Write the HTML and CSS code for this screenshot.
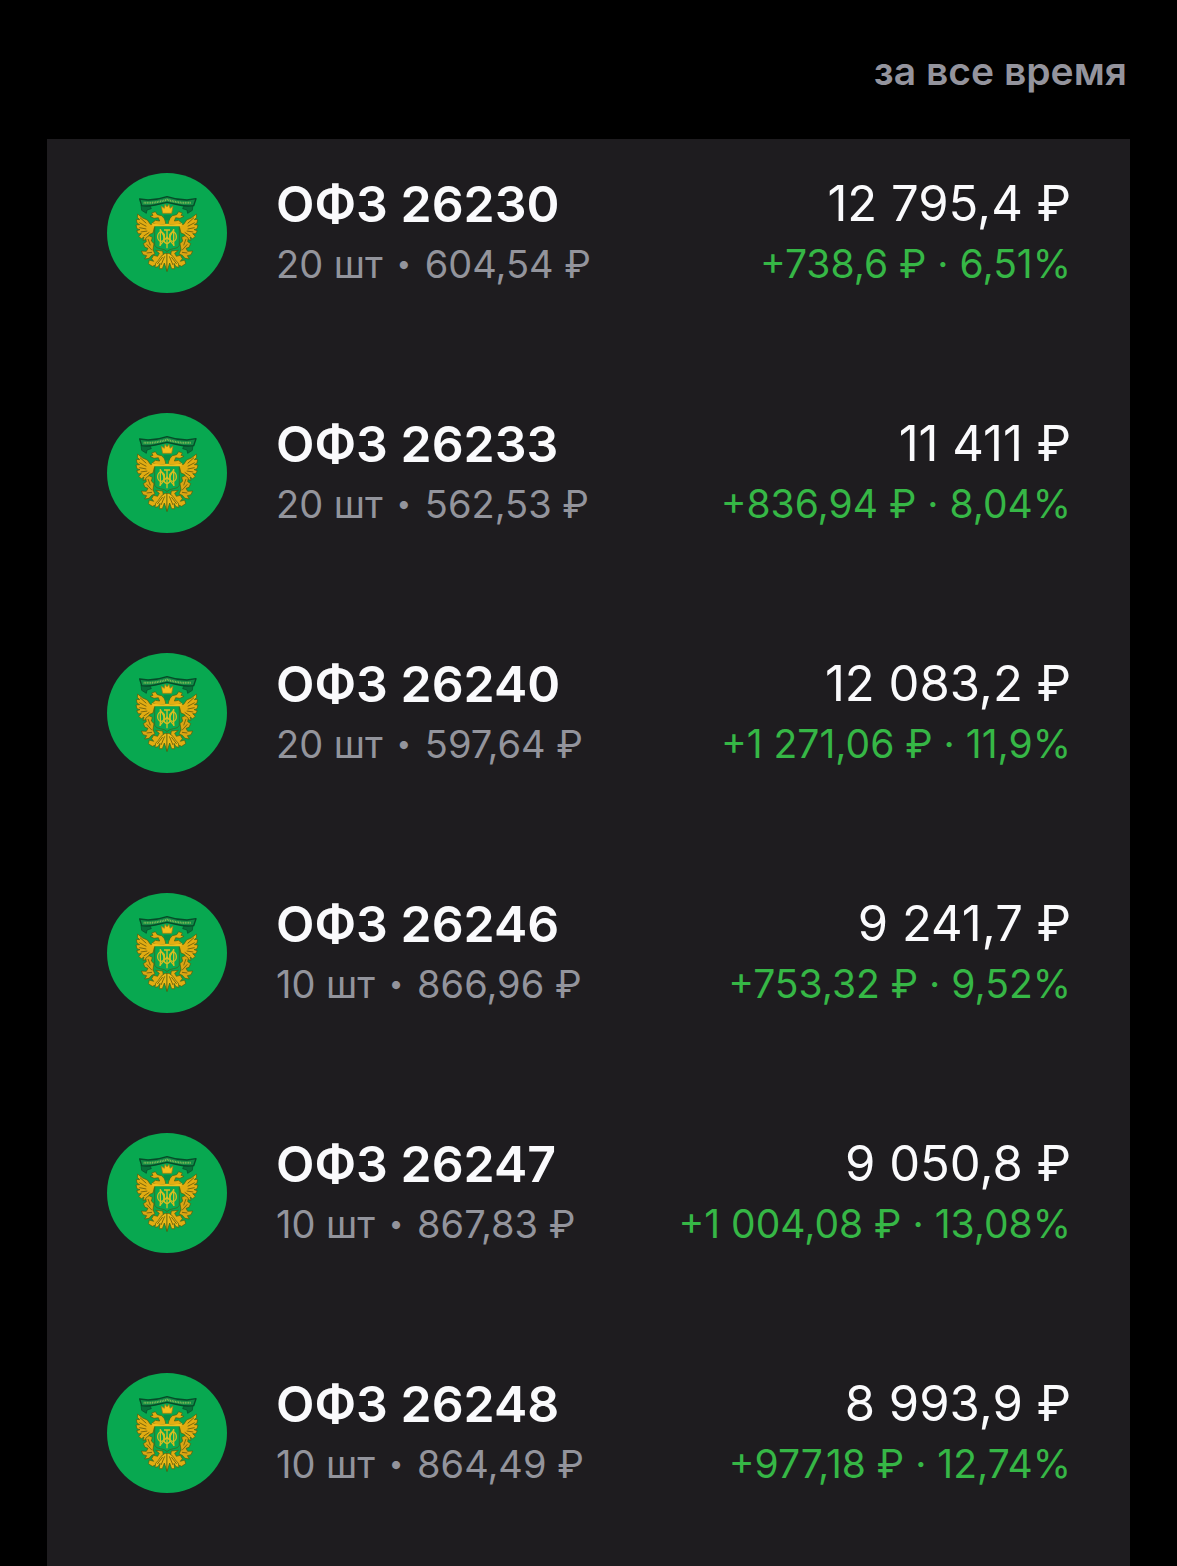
FILE: index.html
```html
<!DOCTYPE html>
<html lang="ru">

<head>
    <meta charset="UTF-8">
    <meta name="viewport" content="width=device-width, initial-scale=1.0">
    <title>Портфель</title>
    <link rel="stylesheet" href="styles.css">
</head>

<body>
    <!-- Bond emblem, reused in every row -->
    <svg class="sprite" aria-hidden="true">
        <symbol id="emblem" viewBox="30 30 360 360">
            <circle cx="210" cy="210" r="180" fill="#08a850" />
            <g id="half" stroke="#4f5a0e" stroke-width="2" stroke-linejoin="round">
                <!-- ribbon end -->
                <path d="M132 126 L134 142 L148 151 L150 141 L163 137 L158 126 Z" fill="#08713a" stroke="#064a28" />
                <!-- wing -->
                <path d="M186 183 L160 184 L151 171 L137 165 L122 153 L121 163 L128 170 L118 169 L120 180 L128 185 L117 186 L120 197 L129 200 L119 203 L124 212 L133 212 L125 220 L133 227 L141 222 L138 232 L149 229 L158 214 L168 210 L172 194 Z" fill="#e2ac12" />
                <path d="M129 164 L148 181 M127 179 L148 190 M127 194 L148 198 M131 207 L151 204 M140 219 L157 208" fill="none" stroke="#7b680d" stroke-width="3" />
                <!-- neck and head -->
                <path d="M207 184 L203 168 L194 158 L181 155 L175 146 L164 150 L168 157 L159 160 L171 166 L184 164 L188 174 L175 172 L166 180 L180 186 Z" fill="#e2ac12" />
                <!-- figure beside the shield -->
                <path d="M156 218 L146 225 L148 236 L139 242 L144 253 L153 256 L148 265 L133 264 L138 275 L149 278 L143 288 L156 286 L164 277 L174 273 L168 260 L171 242 L163 234 L166 223 Z" fill="#d9a514" />
                <path d="M153 228 L160 247 M149 244 L165 262 M149 270 L165 268" fill="none" stroke="#7b680d" stroke-width="3" />
                <!-- leg and scroll -->
                <path d="M176 262 L187 271 L182 280 L170 277 L164 287 L170 295 L157 291 L154 302 L166 310 L178 305 L188 290 L199 276 L197 264 Z" fill="#e2ac12" />
                <!-- tail feathers -->
                <path d="M204 271 L192 280 L184 292 L176 301 L174 313 L183 311 L189 301 L187 317 L196 317 L202 300 L210 325 L210 271 Z" fill="#e9b817" />
                <path d="M203 280 L192 306 M197 282 L181 303" fill="none" stroke="#7b680d" stroke-width="3" />
            </g>
            <use href="#half" transform="translate(420 0) scale(-1 1)" />
            <!-- shield -->
            <path d="M173 188 H247 V247 Q244 256 230 257 Q215 259 210 266 Q205 259 190 257 Q176 256 173 247 Z" fill="#08a850" stroke="#4b5b10" stroke-width="2" />
            <path d="M164 180 Q188 187 210 182 Q232 187 256 180 L253 190 H167 Z" fill="#f0bd1b" />
            <!-- monogram -->
            <g fill="none" stroke="#d8bd20" stroke-width="4">
                <path d="M190 198 V248 M230 198 V248 M190 200 L202 222 M230 200 L218 222 M210 200 V256 M201 201 H219" />
                <ellipse cx="192" cy="221" rx="10" ry="14" />
                <ellipse cx="228" cy="221" rx="10" ry="14" />
                <path d="M188 248 L210 222 L232 248 M201 212 V232 Q202 240 210 242 Q218 240 219 232 V212" />
            </g>
            <!-- crown -->
            <path d="M197 151 L193 130 L202 136 L204 124 L210 132 L216 124 L219 136 L228 130 L224 151 Z" fill="#f3bd1c" stroke="#a47a10" stroke-width="2" />
            <path d="M199 155 H222 L218 172 H203 Z" fill="#0a8e43" />
            <!-- ribbon -->
            <path d="M128 108 L153 111 Q181 111 210 101 Q239 111 270 111 L297 107 L290 128 Q267 131 247 126 L210 118 L174 126 Q153 131 134 128 Z" fill="#118a45" stroke="#064a28" stroke-width="4" stroke-linejoin="round" />
            <path d="M140 119 Q171 122 210 110 Q249 122 282 119" fill="none" stroke="#83bd58" stroke-width="6" stroke-dasharray="3 2" />
        </symbol>
    </svg>

    <header class="header">
        <span class="period">за все время</span>
    </header>

    <main class="card">
        <ul class="list">
            <li class="row">
                <svg class="logo" aria-hidden="true"><use href="#emblem" /></svg>
                <div class="info">
                    <div class="name">ОФЗ 26230</div>
                    <div class="detail">20 шт <span class="dot">•</span> 604,54 ₽</div>
                </div>
                <div class="value">
                    <div class="total">12 795,4 ₽</div>
                    <div class="profit">+738,6 ₽ · 6,51%</div>
                </div>
            </li>
            <li class="row">
                <svg class="logo" aria-hidden="true"><use href="#emblem" /></svg>
                <div class="info">
                    <div class="name">ОФЗ 26233</div>
                    <div class="detail">20 шт <span class="dot">•</span> 562,53 ₽</div>
                </div>
                <div class="value">
                    <div class="total">11 411 ₽</div>
                    <div class="profit">+836,94 ₽ · 8,04%</div>
                </div>
            </li>
            <li class="row">
                <svg class="logo" aria-hidden="true"><use href="#emblem" /></svg>
                <div class="info">
                    <div class="name">ОФЗ 26240</div>
                    <div class="detail">20 шт <span class="dot">•</span> 597,64 ₽</div>
                </div>
                <div class="value">
                    <div class="total">12 083,2 ₽</div>
                    <div class="profit">+1 271,06 ₽ · 11,9%</div>
                </div>
            </li>
            <li class="row">
                <svg class="logo" aria-hidden="true"><use href="#emblem" /></svg>
                <div class="info">
                    <div class="name">ОФЗ 26246</div>
                    <div class="detail">10 шт <span class="dot">•</span> 866,96 ₽</div>
                </div>
                <div class="value">
                    <div class="total">9 241,7 ₽</div>
                    <div class="profit">+753,32 ₽ · 9,52%</div>
                </div>
            </li>
            <li class="row">
                <svg class="logo" aria-hidden="true"><use href="#emblem" /></svg>
                <div class="info">
                    <div class="name">ОФЗ 26247</div>
                    <div class="detail">10 шт <span class="dot">•</span> 867,83 ₽</div>
                </div>
                <div class="value">
                    <div class="total">9 050,8 ₽</div>
                    <div class="profit">+1 004,08 ₽ · 13,08%</div>
                </div>
            </li>
            <li class="row">
                <svg class="logo" aria-hidden="true"><use href="#emblem" /></svg>
                <div class="info">
                    <div class="name">ОФЗ 26248</div>
                    <div class="detail">10 шт <span class="dot">•</span> 864,49 ₽</div>
                </div>
                <div class="value">
                    <div class="total">8 993,9 ₽</div>
                    <div class="profit">+977,18 ₽ · 12,74%</div>
                </div>
            </li>
        </ul>
    </main>
</body>

</html>
```
FILE: styles.css
```css
* {
    box-sizing: border-box;
}

body {
    display: flex;
    flex-direction: column;
    min-height: 100vh;
    margin: 0;
    padding: 0 47px;
    background: #000;
    color: #fafafc;
    font-family: Inter, "Noto Sans", sans-serif;
}

.sprite {
    display: block;
    width: 0;
    height: 0;
}

.header {
    display: flex;
    justify-content: flex-end;
    padding: 47px 3px 44px;
}

.period {
    color: #94949d;
    font-size: 39px;
    font-weight: 600;
    line-height: 48px;
}

.card {
    flex: 1;
    padding: 34px 59px 0 60px;
    background: #1e1c1f;
}

.list {
    display: flex;
    flex-direction: column;
    gap: 119px;
    margin: 0;
    padding: 0;
    list-style: none;
}

.row {
    display: flex;
    align-items: flex-start;
}

.logo {
    flex: none;
    width: 120px;
    height: 120px;
    margin-right: 49px;
}

.info,
.value {
    padding-top: 1px;
    line-height: 60px;
    white-space: nowrap;
}

.value {
    margin-left: auto;
    text-align: right;
}

.name {
    font-size: 50px;
    font-weight: 600;
}

.total {
    font-size: 49px;
}

.detail {
    color: #93949c;
    font-size: 38px;
}

.dot {
    padding: 0 3px;
    font-size: 26px;
    line-height: 1;
    vertical-align: 5px;
}

.profit {
    color: #36b746;
    font-size: 39px;
}
```
